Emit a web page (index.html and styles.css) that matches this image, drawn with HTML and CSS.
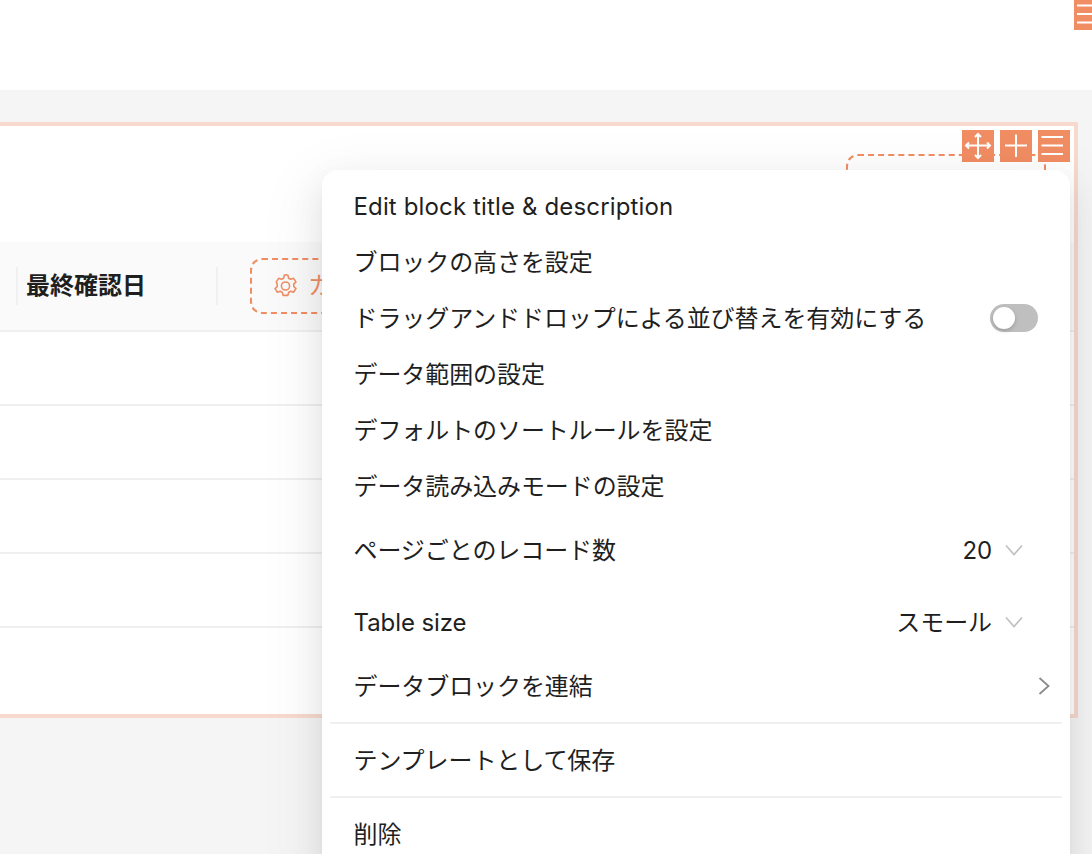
FILE: index.html
```html
<!DOCTYPE html>
<html lang="ja">
<head>
<meta charset="utf-8">
<title>Table block settings</title>
<link rel="stylesheet" href="styles.css">
</head>
<body>
<header class="topbar">
  <span class="tile tile-corner">
    <svg viewBox="0 0 30 30" class="tile-icon"><path d="M3 5.500h26M3 14h26M3 22.500h26"/></svg>
  </span>
</header>
<main class="content">
  <section class="card">
    <div class="tools">
      <span class="tile"><svg viewBox="0 0 32 32" class="tile-icon thin"><path d="M16 4v24M4 15.500h24M13 7l3-3 3 3M13 25l3 3 3-3M7 12.500l-3 3 3 3M25 12.500l3 3-3 3"/></svg></span>
      <span class="tile"><svg viewBox="0 0 32 32" class="tile-icon"><path d="M16 4.500v22.500M5 15.500h22"/></svg></span>
      <span class="tile"><svg viewBox="0 0 32 32" class="tile-icon"><path d="M3.500 7h21.500M3.500 15.500h21.500M3.500 24h21.500"/></svg></span>
    </div>
    <div class="card-top">
      <div class="dashed-top"></div>
    </div>
    <div class="thead">
      <div class="th-spacer"></div>
      <div class="th">最終確認日</div>
      <div class="config-btn">
        <svg viewBox="3.500 2 17 20" class="gear"><path d="M12 2.600l2 .4.6 2.500 1.700.9 2.400-.8 2 3-1.800 1.800v2l1.800 1.800-2 3-2.400-.8-1.700 1-.6 2.400h-4l-.6-2.400-1.700-1-2.400.8-2-3 1.800-1.800v-2L4.300 8.600l2-3 2.400.8 1.700-.9.600-2.500z"/><circle cx="12" cy="12" r="3.400"/></svg>
        <span class="config-label">カ</span>
      </div>
    </div>
    <div class="row"></div>
    <div class="row"></div>
    <div class="row"></div>
    <div class="row"></div>
  </section>
</main>
<nav class="menu">
  <div class="item wide-latin">Edit block title &amp; description</div>
  <div class="item">ブロックの高さを設定</div>
  <div class="item">ドラッグアンドドロップによる並び替えを有効にする<span class="switch"><span class="knob"></span></span></div>
  <div class="item">データ範囲の設定</div>
  <div class="item">デフォルトのソートルールを設定</div>
  <div class="item">データ読み込みモードの設定</div>
  <div class="item tall">ページごとのレコード数<span class="select"><span>20</span><svg viewBox="0 0 18 12" class="chev"><path d="M1 1.500l8 9 8-9"/></svg></span></div>
  <div class="item tall">Table size<span class="select"><span>スモール</span><svg viewBox="0 0 18 12" class="chev"><path d="M1 1.500l8 9 8-9"/></svg></span></div>
  <div class="item">データブロックを連結<svg viewBox="0 0 12 18" class="arrow"><path d="M1.500 1l9 8-9 8"/></svg></div>
  <div class="divider"></div>
  <div class="item">テンプレートとして保存</div>
  <div class="divider"></div>
  <div class="item">削除</div>
</nav>
</body>
</html>
```
FILE: styles.css
```css
* { box-sizing: border-box; }
html, body { margin: 0; height: 854px; overflow: hidden; }
body {
  background: #f5f5f5;
  font-family: "Inter", "Noto Sans CJK JP", sans-serif;
  color: #1f1f1f;
  position: relative;
}
.topbar {
  height: 90px;
  background: #fff;
  display: flex;
  justify-content: flex-end;
}
.tile {
  width: 32px;
  height: 32px;
  background: #f18d63;
  display: block;
  flex: none;
}
.tile-corner {
  width: 18px;
  height: 30px;
  overflow: hidden;
}
.tile-corner .tile-icon { width: 30px; height: 30px; }
.tile-icon {
  display: block;
  width: 32px;
  height: 32px;
  fill: none;
  stroke: #fff;
  stroke-width: 2;
}
.content { padding: 32px 14px 0 0; }
.card {
  position: relative;
  margin-left: -20px;
  height: 596px;
  background: #fff;
  border: 4px solid #f7d9ce;
}
.tools {
  position: absolute;
  top: 4px;
  right: 4px;
  display: flex;
  gap: 6px;
  z-index: 2;
}
.card-top {
  height: 116px;
  padding: 28px 28px 0 0;
  display: flex;
  justify-content: flex-end;
}
.dashed-top {
  width: 200px;
  height: 56px;
  border: 2px dashed #f18d63;
  border-radius: 12px;
}
.thead {
  height: 90px;
  background: #fafafa;
  border-bottom: 2px solid #f0f0f0;
  display: flex;
  align-items: center;
}
.th-spacer { width: 32px; height: 38px; }
.th {
  width: 202px;
  height: 38px;
  padding-left: 8px;
  border-left: 2px solid #f0f0f0;
  border-right: 2px solid #f0f0f0;
  font-size: 24px;
  line-height: 38px;
  font-weight: 700;
}
.config-btn {
  margin-left: 32px;
  width: 240px;
  height: 56px;
  padding-left: 22px;
  border: 2px dashed #f18d63;
  border-radius: 12px;
  display: flex;
  align-items: center;
  gap: 11px;
  color: #f18d63;
  font-size: 24px;
  line-height: 32px;
  white-space: nowrap;
}
.gear {
  flex: none;
  width: 23px;
  height: 24px;
  fill: none;
  stroke: #f18d63;
  stroke-width: 1.3;
  stroke-linejoin: round;
}
.row { height: 74px; border-bottom: 2px solid #f0f0f0; }
.menu {
  position: absolute;
  left: 322px;
  top: 170px;
  width: 748px;
  height: 720px;
  padding: 8px;
  background: #fff;
  border-radius: 16px;
  box-shadow: 0 12px 32px rgba(0, 0, 0, .08), 0 6px 12px -8px rgba(0, 0, 0, .12), 0 18px 56px 16px rgba(0, 0, 0, .05);
  z-index: 3;
}
.item {
  height: 56px;
  padding: 2px 24px 0 23.500px;
  display: flex;
  align-items: center;
  justify-content: space-between;
  font-size: 24px;
  line-height: 32px;
  letter-spacing: -.08px;
  white-space: nowrap;
}
.wide-latin { letter-spacing: .14px; }
.item.tall { height: 72px; }
.switch {
  width: 48px;
  height: 28px;
  margin-top: -2px;
  background: #bfbfbf;
  border-radius: 14px;
  padding: 3px;
  display: block;
}
.knob {
  display: block;
  width: 22px;
  height: 22px;
  background: #fff;
  border-radius: 50%;
  box-shadow: 0 2px 4px rgba(0, 35, 11, .2);
}
.select {
  display: flex;
  align-items: center;
  gap: 13px;
  padding-right: 15px;
}
.chev {
  width: 18px;
  height: 12px;
  margin-top: -2px;
  fill: none;
  stroke: #bfbfbf;
  stroke-width: 1.6;
}
.arrow {
  width: 12px;
  height: 18px;
  margin-top: -2px;
  margin-right: -12px;
  fill: none;
  stroke: #8c8c8c;
  stroke-width: 1.800;
}
.divider {
  height: 2px;
  margin: 8px 0;
  background: #f0f0f0;
}
```
